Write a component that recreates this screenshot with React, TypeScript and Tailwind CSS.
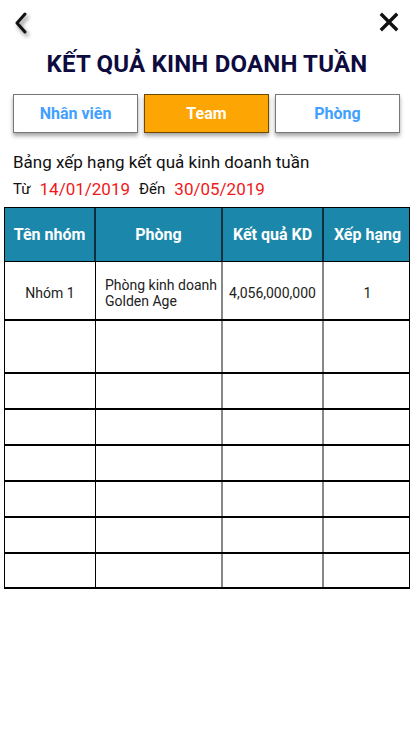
import React from "react";

const cols = "grid grid-cols-[91px_127px_101px_87px]";

function BodyRow({ h, cells, pad }: { h: string; cells?: React.ReactNode[]; pad?: string }) {
  const c = cells ?? ["", "", "", ""];
  return (
    <div className={`${cols} ${h} border-b-2 border-black`}>
      <div className={`flex items-center justify-center border-r border-black text-[14px] text-[#222] ${pad ?? ""}`}>{c[0]}</div>
      <div className={`flex items-center border-r-2 border-[#888] pl-[9px] text-[14px] leading-[16px] text-[#222] ${pad ?? ""}`}>{c[1]}</div>
      <div className={`flex items-center justify-center border-r-2 border-[#888] text-[14px] text-[#222] ${pad ?? ""}`}>{c[2]}</div>
      <div className={`flex items-center justify-center text-[14px] text-[#222] ${pad ?? ""}`}>{c[3]}</div>
    </div>
  );
}

export default function App() {
  return (
    <div className="w-[414px] h-[736px] bg-white font-['Roboto',sans-serif] overflow-hidden">
      <div className="flex items-center justify-between h-[44px] pl-[13px] pr-[13px]">
        <svg width="20" height="26" viewBox="0 0 20 26" className="mt-[2px]" style={{ filter: "drop-shadow(2px 3px 2px rgba(0,0,0,0.5))" }}>
          <path d="M12 4 L4 13 L12 22" fill="none" stroke="#111" strokeWidth="3" strokeLinecap="round" strokeLinejoin="round" />
        </svg>
        <svg width="20" height="20" viewBox="0 0 20 20" className="mt-[0px] mr-[2px]">
          <path d="M3 3 L17 17 M17 3 L3 17" stroke="#111" strokeWidth="3.4" strokeLinecap="square" />
        </svg>
      </div>
      <div className="h-[40px] flex items-center justify-center text-[24px] font-bold text-[#0e0b3f] tracking-[0.2px]">
        KẾT QUẢ KINH DOANH TUẦN
      </div>
      <div className="flex gap-[6px] px-[13px] mt-[10px]">
        <div className="w-[125px] h-[39px] border border-[#777] bg-white shadow-[0_3px_4px_rgba(0,0,0,0.35)] flex items-center justify-center text-[16px] font-bold text-[#3fa0ff]">Nhân viên</div>
        <div className="w-[125px] h-[39px] border border-[#6b4a00] bg-[#fda502] shadow-[0_3px_4px_rgba(0,0,0,0.35)] flex items-center justify-center text-[16px] font-bold text-white">Team</div>
        <div className="w-[125px] h-[39px] border border-[#777] bg-white shadow-[0_3px_4px_rgba(0,0,0,0.35)] flex items-center justify-center text-[16px] font-bold text-[#3fa0ff]">Phòng</div>
      </div>
      <div className="px-[13px] mt-[18px] text-[17px] text-[#111] leading-[22px]">Bảng xếp hạng kết quả kinh doanh tuần</div>
      <div className="px-[13px] mt-[5px] flex items-center leading-[22px]">
        <span className="text-[15px] text-[#111]">Từ</span>
        <span className="text-[17px] text-[#f01818] ml-[9px]">14/01/2019</span>
        <span className="text-[15px] text-[#111] ml-[9px]">Đến</span>
        <span className="text-[17px] text-[#f01818] ml-[9px]">30/05/2019</span>
      </div>
      <div className="mx-[4px] mt-[7px] w-[406px] border border-black border-b-0">
        <div className={`${cols} h-[54px] bg-[#1b87aa] border-b border-black text-white font-bold text-[16px]`}>
          <div className="flex items-center justify-center border-r-2 border-[#0f2f3c]">Tên nhóm</div>
          <div className="flex items-center justify-center border-r-2 border-[#0f2f3c]">Phòng</div>
          <div className="flex items-center justify-center border-r-2 border-[#0f2f3c]">Kết quả KD</div>
          <div className="flex items-center justify-center">Xếp hạng</div>
        </div>
        <BodyRow h="h-[59px]" pad="pt-[5px]" cells={["Nhóm 1", <span key="p">Phòng kinh doanh<br />Golden Age</span>, "4,056,000,000", "1"]} />
        <BodyRow h="h-[53px]" />
        <BodyRow h="h-[36px]" />
        <BodyRow h="h-[36px]" />
        <BodyRow h="h-[36px]" />
        <BodyRow h="h-[36px]" />
        <BodyRow h="h-[36px]" />
        <BodyRow h="h-[35px]" />
      </div>
    </div>
  );
}
